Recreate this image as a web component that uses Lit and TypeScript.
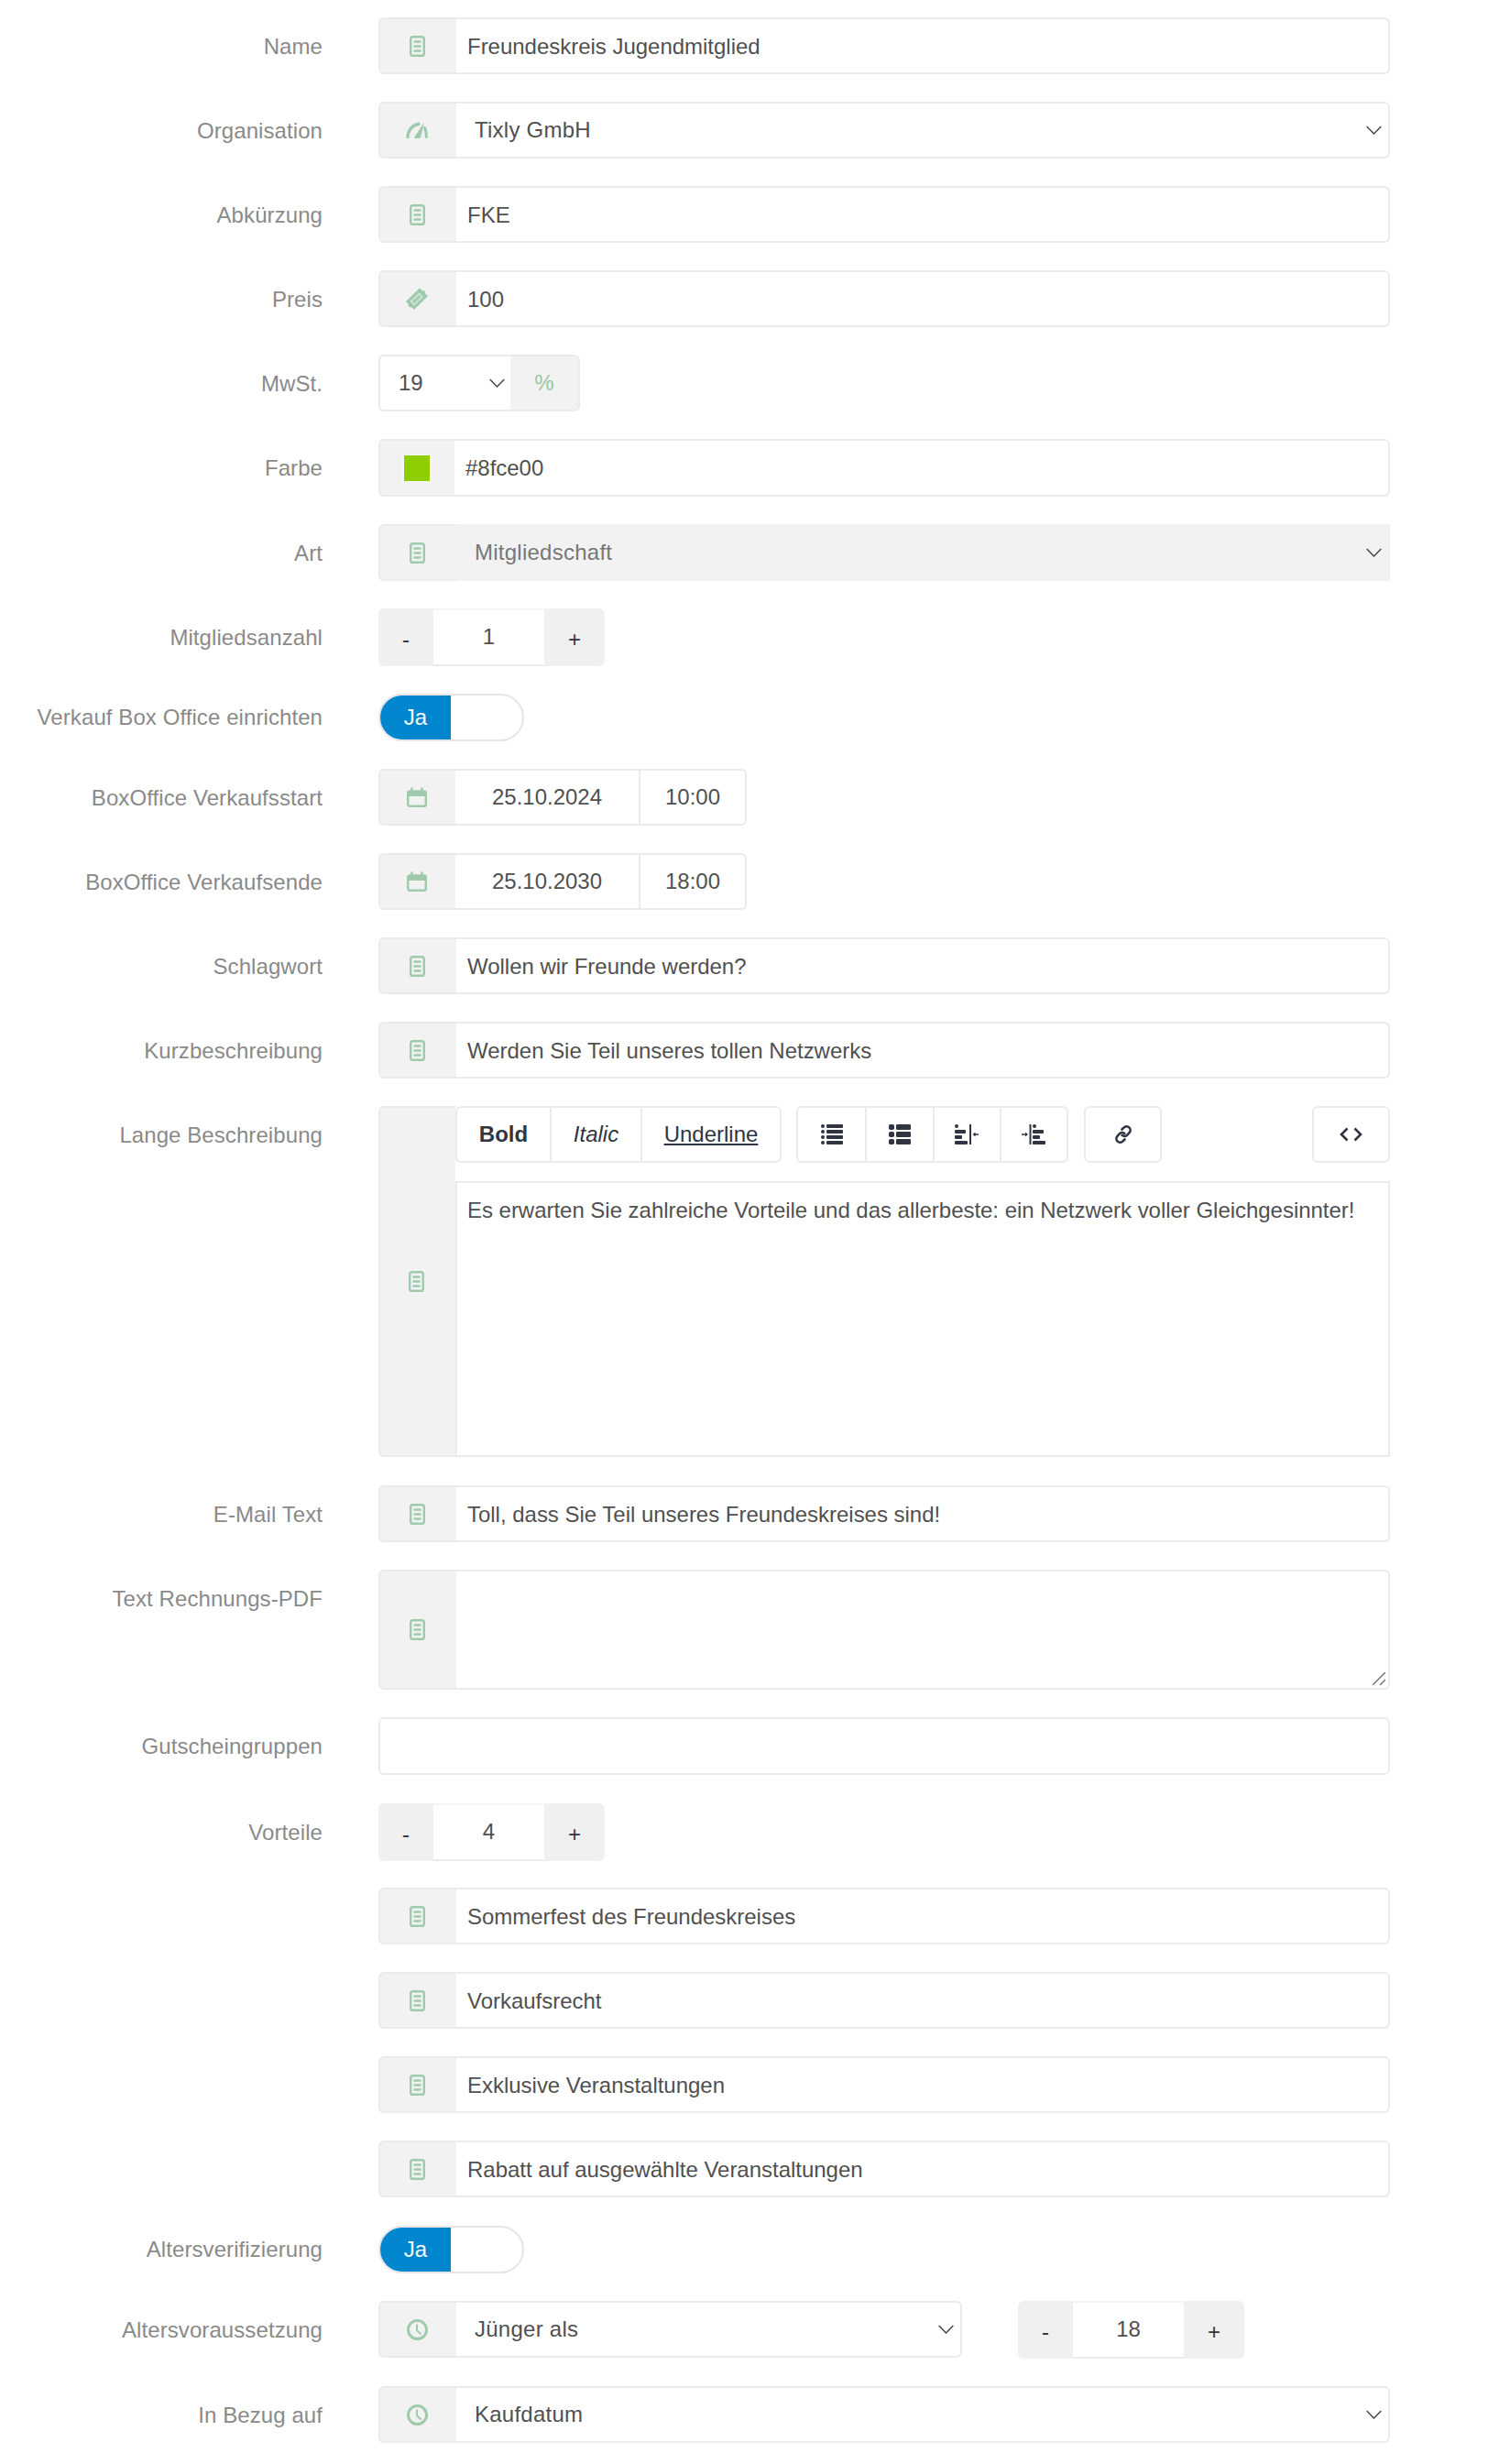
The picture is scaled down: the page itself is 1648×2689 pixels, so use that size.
import { LitElement, html, css } from "lit";
import { customElement } from "lit/decorators.js";

const G = "#9fcbac";
const doc = html`<svg width="17" height="23" viewBox="0 0 17 23" fill="none"><rect x="1.200" y="1.200" width="14.600" height="20.600" rx="2.400" stroke="${G}" stroke-width="2.400"/><path d="M4.500 6.500h8M4.500 11.500h8M4.500 16.500h8" stroke="${G}" stroke-width="2.300"/></svg>`;
const gauge = html`<svg width="24" height="18" viewBox="0 0 24 18" fill="none"><path d="M2 16.500C2 9.500 7 3.500 14 2.300" stroke="${G}" stroke-width="3.400" stroke-linecap="round"/><path d="M20.500 6.500C21.800 9 22.300 13 22.300 16.500" stroke="${G}" stroke-width="3" stroke-linecap="round"/><path d="M9 17 20 0.500 16 17.300c-.5 1-6.500 1-7-.3z" fill="${G}"/></svg>`;
const ticket = html`<svg width="24" height="24" viewBox="0 0 24 24"><path d="M15 .3 18 3.200c.8-.4 1.800-.2 2.500.5.700.7.900 1.700.5 2.500L24 9.300 8.800 24 5.800 21c-.8.400-1.800.2-2.500-.5-.7-.7-.9-1.700-.5-2.500L0 15z" fill="${G}"/><path d="M14.500 6.500 18 10l-9 8.500L5.500 15z" fill="#a8d0b4" stroke="#d7e8dc" stroke-width="1.300"/></svg>`;
const cal = html`<svg width="22" height="22" viewBox="0 0 22 22" fill="none"><rect x="1.200" y="4.500" width="19.600" height="16.300" rx="2" stroke="${G}" stroke-width="2.400"/><rect x="0.500" y="4" width="21" height="6" rx="1.500" fill="${G}"/><path d="M5.500 .5v5M16.500 .5v5" stroke="${G}" stroke-width="2.400"/></svg>`;
const clock = html`<svg width="23" height="23" viewBox="0 0 23 23" fill="none"><circle cx="11.500" cy="11.500" r="10" stroke="${G}" stroke-width="3"/><path d="M11 5.500v6.500l4.500 4.500" stroke="${G}" stroke-width="2"/></svg>`;
const chevron = html`<svg width="17" height="10" viewBox="0 0 17 10" fill="none"><path d="M.7 1 8.500 9 16.300 1" stroke="#4a4a4a" stroke-width="1.500"/></svg>`;

const D = "#2f3542";
const tbList = html`<svg width="24" height="22" viewBox="0 0 24 22" fill="${D}"><circle cx="2" cy="2" r="2"/><rect x="6" y="0" width="18" height="4" rx="1"/><circle cx="2" cy="8" r="2"/><rect x="6" y="6" width="18" height="4" rx="1"/><circle cx="2" cy="14" r="2"/><rect x="6" y="12" width="18" height="4" rx="1"/><circle cx="2" cy="20" r="2"/><rect x="6" y="18" width="18" height="4" rx="1"/></svg>`;
const tbBlock = html`<svg width="24" height="22" viewBox="0 0 24 22" fill="${D}"><rect x="0" y="0" width="6" height="6" rx="1.800"/><rect x="8" y="0" width="16" height="6" rx="1.200"/><rect x="0" y="8" width="6" height="6" rx="1.800"/><rect x="8" y="8" width="16" height="6" rx="1.200"/><rect x="0" y="16" width="6" height="6" rx="1.800"/><rect x="8" y="16" width="16" height="6" rx="1.200"/></svg>`;
const tbOut = html`<svg width="26" height="22" viewBox="0 0 26 22" fill="${D}"><circle cx="2" cy="2" r="2"/><rect x="0" y="6" width="12" height="4" rx="1"/><rect x="0" y="12" width="8" height="4" rx="1"/><rect x="0" y="18" width="14" height="4" rx="1"/><rect x="16" y="0" width="2" height="22"/><path d="M19.500 11 22.500 8.500v1.700H26v1.600h-3.500v1.700z"/></svg>`;
const tbIn = html`<svg width="26" height="22" viewBox="0 0 26 22" fill="${D}"><path d="M7 11 4 8.500v1.700H0v1.600h4v1.700z"/><rect x="8.500" y="0" width="2" height="22"/><circle cx="14" cy="2" r="2"/><rect x="12" y="6" width="12" height="4" rx="1"/><rect x="12" y="12" width="8" height="4" rx="1"/><rect x="12" y="18" width="14" height="4" rx="1"/></svg>`;
const tbLink = html`<svg width="20" height="20" viewBox="0 0 20 20" fill="none" stroke="${D}" stroke-width="2.600" stroke-linecap="round"><path d="M8.500 4.500 10.500 2.600a4 4 0 0 1 6 5.600L14.300 10.600a4 4 0 0 1-5.600.300"/><path d="M11.500 15.500 9.500 17.400a4 4 0 0 1-6-5.600L5.700 9.400a4 4 0 0 1 5.600-.300"/></svg>`;
const tbCode = html`<svg width="25" height="16" viewBox="0 0 25 16" fill="none" stroke="${D}" stroke-width="2.600"><path d="M8.500 1.500 2 8l6.500 6.500M16.500 1.500 23 8l-6.500 6.500"/></svg>`;
const gripIcon = html`<svg class="grip" width="14" height="14" viewBox="0 0 14 14"><path d="M0 14 14 0M8 14 14 8" stroke="#777" stroke-width="1.500" fill="none"/></svg>`;

@customElement("app-root")
export class AppRoot extends LitElement {
  static styles = css`
    :host { display: block; width: 1648px; padding: 19px 0 24px; box-sizing: border-box; background: #fff;
      font: 24px "Liberation Sans", Arial, sans-serif; color: #505050; }
    .row { display: flex; margin: 0 131px 30px 0; align-items: flex-start; }
    .row.gap29 { margin-bottom: 29px; }
    .row.gap31 { margin-bottom: 31px; }
    .row:last-child { margin-bottom: 0; }
    .label { flex: 0 0 352px; width: 352px; height: 62px; text-align: right; color: #8a8a8a; line-height: 63px; white-space: nowrap; letter-spacing: 0.08px; }
    .label.toggle-l { height: 52px; line-height: 52px; }
    .ctl { margin-left: 61px; flex: 1 1 auto; min-width: 0; display: flex; }
    .group { display: flex; flex: 1 1 auto; min-width: 0; height: 62px; box-sizing: border-box; }
    .group.h63 { height: 63px; }
    .group.area { height: 131px; }
    .addon { flex: 0 0 85px; box-sizing: border-box; background: #f2f2f2; border: 2px solid #ebebeb; border-right: 0;
      border-radius: 6px 0 0 6px; display: flex; align-items: center; justify-content: center; padding-right: 3px; }
    .addon.narrow { flex-basis: 83px; padding-right: 1px; }
    .field { flex: 1 1 auto; min-width: 0; box-sizing: border-box; border: 2px solid #ebebeb; border-left: 0; border-radius: 0 6px 6px 0;
      background: #fff; display: flex; align-items: center; padding: 1px 11px 0 12px; white-space: nowrap; letter-spacing: -0.02px; }
    .field.select { padding: 0 7px 0 20px; justify-content: space-between; letter-spacing: 0.25px; }
    .field.disabled { background: #f2f2f2; color: #777; border-radius: 0; border-color: #f2f2f2; }
    .field.plain { border-left: 2px solid #ebebeb; border-radius: 6px; height: 63px; flex: 1 1 auto; }
    .field.textarea { position: relative; }
    .grip { position: absolute; right: 3px; bottom: 3px; }
    .short { flex: 0 0 auto; height: 62px; display: flex; }
    .vat-sel { width: 144px; box-sizing: border-box; border: 2px solid #ebebeb; border-right: 0; border-radius: 6px 0 0 6px;
      display: flex; align-items: center; justify-content: space-between; padding: 0 6px 0 20px; }
    .vat-add { width: 76px; box-sizing: border-box; background: #f2f2f2; border: 2px solid #ebebeb; border-left: 0;
      border-radius: 0 6px 6px 0; display: flex; align-items: center; justify-content: center; color: #96c7a4; }
    .step { flex: 0 0 auto; height: 63px; display: flex; }
    .step .b { background: #f0f0f0; color: #2f3542; display: flex; align-items: center; justify-content: center; padding-top: 4px; box-sizing: border-box; }
    .step .minus { width: 60px; border-radius: 6px 0 0 6px; }
    .step .plus { width: 66px; border-radius: 0 6px 6px 0; }
    .step .v { width: 121px; box-sizing: border-box; border-top: 2px solid #f4f4f4; border-bottom: 2px solid #ebebeb; display: flex; align-items: center; justify-content: center; padding-bottom: 2px; }
    .toggle { width: 159px; height: 52px; box-sizing: border-box; border: 2px solid #e6e6e6; border-radius: 26px; overflow: hidden; background: #fff; }
    .toggle div { width: 77px; height: 100%; background: #0086cf; color: #fff; display: flex; align-items: center; justify-content: center; }
    .dates { display: flex; height: 62px; flex: 0 0 auto; }
    .dates .addon { flex-basis: 84px; }
    .dates .d { width: 200px; box-sizing: border-box; border: 2px solid #ebebeb; border-width: 2px 0; display: flex; align-items: center; justify-content: center; }
    .dates .t { width: 118px; box-sizing: border-box; border: 2px solid #ebebeb; border-radius: 0 6px 6px 0; display: flex; align-items: center; justify-content: center; }
    .editor { display: flex; flex: 1 1 auto; height: 383px; }
    .editor .addon { flex-basis: 84px; }
    .editor-main { flex: 1 1 auto; min-width: 0; display: flex; flex-direction: column; }
    .toolbar { display: flex; height: 62px; flex: 0 0 auto; }
    .tgroup { display: flex; box-sizing: border-box; border: 2px solid #ebebeb; border-radius: 6px; color: #2f3542; margin-right: 16px; }
    .tgroup.g2 { margin-right: 17px; }
    .tgroup.last { margin: 0 0 0 auto; }
    .tb { box-sizing: border-box; display: flex; align-items: center; justify-content: center; border-left: 2px solid #ebebeb; }
    .tb:first-child { border-left: 0; }
    .bold { width: 101px; font-weight: 700; } .italic { width: 99px; font-style: italic; } .under { width: 152px; text-decoration: underline; }
    .i { width: 73.25px; } .link, .code { width: 81px; }
    .body { margin-top: 20px; flex: 1 1 auto; box-sizing: border-box; border: 2px solid #ebebeb; padding: 16px 11px; line-height: 28px; white-space: nowrap; letter-spacing: -0.03px; }
    .age { display: flex; flex: 1 1 auto; gap: 61px; }
    .age .group { flex: 0 0 637px; }
    svg { display: block; }
  `;

  private lbl(t: string) { return html`<div class="label">${t}</div>`; }
  private text(label: string, value: string, cls = "") {
    return html`<div class="row ${cls}">${this.lbl(label)}<div class="ctl"><div class="group"><div class="addon">${doc}</div><div class="field">${value}</div></div></div></div>`;
  }
  private select(label: string, value: string, icon: unknown, disabled = false) {
    return html`<div class="row">${this.lbl(label)}<div class="ctl"><div class="group"><div class="addon">${icon}</div><div class="field select ${disabled ? "disabled" : ""}"><span>${value}</span>${chevron}</div></div></div></div>`;
  }
  private stepper(v: string) {
    return html`<div class="step"><div class="b minus">-</div><div class="v">${v}</div><div class="b plus">+</div></div>`;
  }
  private toggle(label: string) {
    return html`<div class="row"><div class="label toggle-l">${label}</div><div class="ctl"><div class="toggle"><div>Ja</div></div></div></div>`;
  }
  private dates(label: string, d: string, t: string) {
    return html`<div class="row">${this.lbl(label)}<div class="ctl"><div class="dates"><div class="addon">${cal}</div><div class="d">${d}</div><div class="t">${t}</div></div></div></div>`;
  }

  render() {
    return html`
      ${this.text("Name", "Freundeskreis Jugendmitglied")}
      ${this.select("Organisation", "Tixly GmbH", gauge)}
      ${this.text("Abkürzung", "FKE")}
      <div class="row">${this.lbl("Preis")}<div class="ctl"><div class="group"><div class="addon">${ticket}</div><div class="field">100</div></div></div></div>
      <div class="row">${this.lbl("MwSt.")}<div class="ctl"><div class="short"><div class="vat-sel"><span>19</span>${chevron}</div><div class="vat-add">%</div></div></div></div>
      <div class="row">${this.lbl("Farbe")}<div class="ctl"><div class="group h63"><div class="addon narrow"><svg width="32" height="32" viewBox="0 0 32 32"><rect x="0" y="0" width="32" height="32" fill="#f7f7f7"/><rect x="2" y="2" width="28" height="28" fill="#8fce00"/></svg></div><div class="field">#8fce00</div></div></div></div>
      ${this.select("Art", "Mitgliedschaft", doc, true)}
      <div class="row">${this.lbl("Mitgliedsanzahl")}<div class="ctl">${this.stepper("1")}</div></div>
      ${this.toggle("Verkauf Box Office einrichten")}
      ${this.dates("BoxOffice Verkaufsstart", "25.10.2024", "10:00")}
      ${this.dates("BoxOffice Verkaufsende", "25.10.2030", "18:00")}
      ${this.text("Schlagwort", "Wollen wir Freunde werden?")}
      ${this.text("Kurzbeschreibung", "Werden Sie Teil unseres tollen Netzwerks")}
      <div class="row gap31">${this.lbl("Lange Beschreibung")}<div class="ctl"><div class="editor">
        <div class="addon">${doc}</div>
        <div class="editor-main">
          <div class="toolbar">
            <div class="tgroup"><div class="tb bold">Bold</div><div class="tb italic">Italic</div><div class="tb under">Underline</div></div>
            <div class="tgroup g2"><div class="tb i">${tbList}</div><div class="tb i">${tbBlock}</div><div class="tb i">${tbOut}</div><div class="tb i">${tbIn}</div></div>
            <div class="tgroup"><div class="tb link">${tbLink}</div></div>
            <div class="tgroup last"><div class="tb code">${tbCode}</div></div>
          </div>
          <div class="body">Es erwarten Sie zahlreiche Vorteile und das allerbeste: ein Netzwerk voller Gleichgesinnter!</div>
        </div>
      </div></div></div>
      ${this.text("E-Mail Text", "Toll, dass Sie Teil unseres Freundeskreises sind!")}
      <div class="row">${this.lbl("Text Rechnungs-PDF")}<div class="ctl"><div class="group area"><div class="addon">${doc}</div><div class="field textarea">${gripIcon}</div></div></div></div>
      <div class="row gap31">${this.lbl("Gutscheingruppen")}<div class="ctl"><div class="field plain"></div></div></div>
      <div class="row gap29">${this.lbl("Vorteile")}<div class="ctl">${this.stepper("4")}</div></div>
      ${this.text("", "Sommerfest des Freundeskreises")}
      ${this.text("", "Vorkaufsrecht")}
      ${this.text("", "Exklusive Veranstaltungen")}
      ${this.text("", "Rabatt auf ausgewählte Veranstaltungen", "gap31")}
      ${this.toggle("Altersverifizierung")}
      <div class="row">${this.lbl("Altersvoraussetzung")}<div class="ctl"><div class="age"><div class="group"><div class="addon">${clock}</div><div class="field select"><span>Jünger als</span>${chevron}</div></div>${this.stepper("18")}</div></div></div>
      ${this.select("In Bezug auf", "Kaufdatum", clock)}
    `;
  }
}
